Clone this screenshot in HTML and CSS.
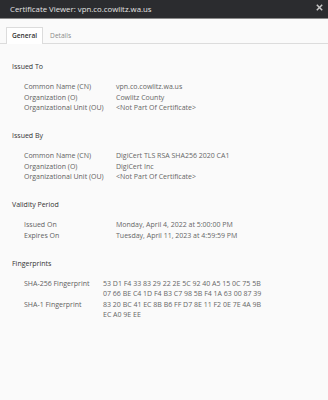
FILE: index.html
```html
<!DOCTYPE html>
<html lang="en">
<head>
    <meta charset="UTF-8">
    <title>Certificate Viewer</title>
    <link rel="stylesheet" href="styles.css">
</head>
<body>
    <div class="titlebar">
        <span class="title">Certificate Viewer: vpn.co.cowlitz.wa.us</span>
        <svg class="close" width="7" height="7" viewBox="0 0 7 7">
            <path d="M0.8 0.8 L6.2 6.2 M6.2 0.8 L0.8 6.2" stroke="#c8c8c8" stroke-width="1.5"/>
        </svg>
    </div>
    <div class="tabs">
        <div class="tab active">General</div>
        <div class="tab">Details</div>
    </div>
    <div class="content">
        <div class="section">
            <div class="heading">Issued To</div>
            <div class="rows">
                <div class="label">Common Name (CN)</div><div class="value">vpn.co.cowlitz.wa.us</div>
                <div class="label">Organization (O)</div><div class="value">Cowlitz County</div>
                <div class="label">Organizational Unit (OU)</div><div class="value">&lt;Not Part Of Certificate&gt;</div>
            </div>
        </div>
        <div class="section">
            <div class="heading">Issued By</div>
            <div class="rows">
                <div class="label">Common Name (CN)</div><div class="value">DigiCert TLS RSA SHA256 2020 CA1</div>
                <div class="label">Organization (O)</div><div class="value">DigiCert Inc</div>
                <div class="label">Organizational Unit (OU)</div><div class="value">&lt;Not Part Of Certificate&gt;</div>
            </div>
        </div>
        <div class="section">
            <div class="heading">Validity Period</div>
            <div class="rows">
                <div class="label">Issued On</div><div class="value">Monday, April 4, 2022 at 5:00:00 PM</div>
                <div class="label">Expires On</div><div class="value">Tuesday, April 11, 2023 at 4:59:59 PM</div>
            </div>
        </div>
        <div class="section">
            <div class="heading">Fingerprints</div>
            <div class="rows fingerprints">
                <div class="label">SHA-256 Fingerprint</div><div class="value">53 D1 F4 33 83 29 22 2E 5C 92 40 A5 15 0C 75 5B 07 66 BE C4 1D F4 B3 C7 98 5B F4 1A 63 00 87 39</div>
                <div class="label">SHA-1 Fingerprint</div><div class="value">83 20 BC 41 EC 8B B6 FF D7 8E 11 F2 0E 7E 4A 9B EC A0 9E EE</div>
            </div>
        </div>
    </div>
</body>
</html>
```

FILE: styles.css
```css
body {
    margin: 0;
    font-family: "Open Sans", "Noto Sans", sans-serif;
    background-color: #fafafa;
    height: 400px;
}

.titlebar {
    height: 18px;
    background-color: #2b2c2f;
    border-bottom: 1px solid #8a8a8a;
    display: flex;
    align-items: center;
    justify-content: space-between;
    padding: 0 5px 0 10px;
}

.title {
    color: #e3e3e3;
    font-size: 7.8px;
}

.close {
    margin-top: -4px;
}

.tabs {
    display: flex;
    align-items: flex-end;
    height: 24px;
    padding-left: 6px;
    border-bottom: 1px solid #dcdcdc;
}

.tab {
    font-size: 6.6px;
    color: #8a8a8a;
    padding: 0 7px;
    height: 15px;
    line-height: 15px;
}

.tab.active {
    color: #333;
    font-weight: 600;
    background-color: #fff;
    border: 1px solid #dcdcdc;
    border-bottom: none;
    padding: 0 5px;
    margin-bottom: -1px;
    height: 16px;
}

.content {
    padding: 18px 12px 0 12px;
    font-size: 7px;
    line-height: 10.5px;
}

.section {
    margin-bottom: 17.5px;
}

.heading {
    color: #333;
    margin-bottom: 9.5px;
}

.rows {
    display: grid;
    grid-template-columns: 92px 1fr;
    padding-left: 12px;
    color: #5f5f5f;
}

.rows.fingerprints {
    grid-template-columns: 79px 165px;
}

.value {
    color: #666;
}
```
